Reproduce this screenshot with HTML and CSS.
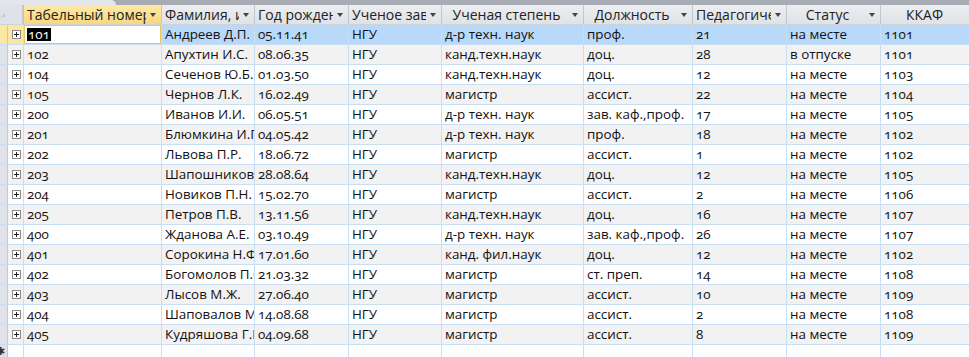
FILE: index.html
```html
<!DOCTYPE html>
<html lang="ru">
<head>
    <meta charset="UTF-8">
    <title>Сотрудники</title>
    <link rel="stylesheet" href="styles.css">
</head>
<body>
    <div class="sheet">
        <div class="topbar"><div class="tab"></div></div>

        <div class="row head">
            <div class="corner"><span class="corner-mark"></span></div>
            <div class="hcell active"><span class="label">Табельный номер</span><span class="arrow"></span></div>
            <div class="hcell"><span class="label">Фамилия, имя, отчество</span><span class="arrow"></span></div>
            <div class="hcell"><span class="label">Год рождения</span><span class="arrow"></span></div>
            <div class="hcell"><span class="label">Ученое заведение</span><span class="arrow"></span></div>
            <div class="hcell"><span class="label">Ученая степень</span><span class="arrow"></span></div>
            <div class="hcell"><span class="label">Должность</span><span class="arrow"></span></div>
            <div class="hcell"><span class="label">Педагогический стаж</span><span class="arrow"></span></div>
            <div class="hcell"><span class="label">Статус</span><span class="arrow"></span></div>
            <div class="hcell"><span class="label">ККАФ</span><span class="arrow"></span></div>
        </div>

        <div class="row current">
            <div class="sel"></div><div class="exp"><span class="plus"></span></div>
            <div class="cell focus"><span class="picked">101</span></div>
            <div class="cell">Андреев Д.П.</div><div class="cell">05.11.41</div><div class="cell">НГУ</div>
            <div class="cell">д-р техн. наук</div><div class="cell">проф.</div><div class="cell">21</div>
            <div class="cell">на месте</div><div class="cell">1101</div>
        </div>
        <div class="row alt">
            <div class="sel"></div><div class="exp"><span class="plus"></span></div>
            <div class="cell">102</div><div class="cell">Апухтин И.С.</div><div class="cell">08.06.35</div><div class="cell">НГУ</div>
            <div class="cell">канд.техн.наук</div><div class="cell">доц.</div><div class="cell">28</div>
            <div class="cell">в отпуске</div><div class="cell">1101</div>
        </div>
        <div class="row">
            <div class="sel"></div><div class="exp"><span class="plus"></span></div>
            <div class="cell">104</div><div class="cell">Сеченов Ю.Б.</div><div class="cell">01.03.50</div><div class="cell">НГУ</div>
            <div class="cell">канд.техн.наук</div><div class="cell">доц.</div><div class="cell">12</div>
            <div class="cell">на месте</div><div class="cell">1103</div>
        </div>
        <div class="row alt">
            <div class="sel"></div><div class="exp"><span class="plus"></span></div>
            <div class="cell">105</div><div class="cell">Чернов Л.К.</div><div class="cell">16.02.49</div><div class="cell">НГУ</div>
            <div class="cell">магистр</div><div class="cell">ассист.</div><div class="cell">22</div>
            <div class="cell">на месте</div><div class="cell">1104</div>
        </div>
        <div class="row">
            <div class="sel"></div><div class="exp"><span class="plus"></span></div>
            <div class="cell">200</div><div class="cell">Иванов И.И.</div><div class="cell">06.05.51</div><div class="cell">НГУ</div>
            <div class="cell">д-р техн. наук</div><div class="cell">зав. каф.,проф.</div><div class="cell">17</div>
            <div class="cell">на месте</div><div class="cell">1105</div>
        </div>
        <div class="row alt">
            <div class="sel"></div><div class="exp"><span class="plus"></span></div>
            <div class="cell">201</div><div class="cell">Блюмкина И.Г.</div><div class="cell">04.05.42</div><div class="cell">НГУ</div>
            <div class="cell">д-р техн. наук</div><div class="cell">проф.</div><div class="cell">18</div>
            <div class="cell">на месте</div><div class="cell">1102</div>
        </div>
        <div class="row">
            <div class="sel"></div><div class="exp"><span class="plus"></span></div>
            <div class="cell">202</div><div class="cell">Львова П.Р.</div><div class="cell">18.06.72</div><div class="cell">НГУ</div>
            <div class="cell">магистр</div><div class="cell">ассист.</div><div class="cell">1</div>
            <div class="cell">на месте</div><div class="cell">1102</div>
        </div>
        <div class="row alt">
            <div class="sel"></div><div class="exp"><span class="plus"></span></div>
            <div class="cell">203</div><div class="cell">Шапошников В.А.</div><div class="cell">28.08.64</div><div class="cell">НГУ</div>
            <div class="cell">канд.техн.наук</div><div class="cell">доц.</div><div class="cell">12</div>
            <div class="cell">на месте</div><div class="cell">1105</div>
        </div>
        <div class="row">
            <div class="sel"></div><div class="exp"><span class="plus"></span></div>
            <div class="cell">204</div><div class="cell">Новиков П.Н.</div><div class="cell">15.02.70</div><div class="cell">НГУ</div>
            <div class="cell">магистр</div><div class="cell">ассист.</div><div class="cell">2</div>
            <div class="cell">на месте</div><div class="cell">1106</div>
        </div>
        <div class="row alt">
            <div class="sel"></div><div class="exp"><span class="plus"></span></div>
            <div class="cell">205</div><div class="cell">Петров П.В.</div><div class="cell">13.11.56</div><div class="cell">НГУ</div>
            <div class="cell">канд.техн.наук</div><div class="cell">доц.</div><div class="cell">16</div>
            <div class="cell">на месте</div><div class="cell">1107</div>
        </div>
        <div class="row">
            <div class="sel"></div><div class="exp"><span class="plus"></span></div>
            <div class="cell">400</div><div class="cell">Жданова А.Е.</div><div class="cell">03.10.49</div><div class="cell">НГУ</div>
            <div class="cell">д-р техн. наук</div><div class="cell">зав. каф.,проф.</div><div class="cell">26</div>
            <div class="cell">на месте</div><div class="cell">1107</div>
        </div>
        <div class="row alt">
            <div class="sel"></div><div class="exp"><span class="plus"></span></div>
            <div class="cell">401</div><div class="cell">Сорокина Н.Ф.</div><div class="cell">17.01.60</div><div class="cell">НГУ</div>
            <div class="cell">канд. фил.наук</div><div class="cell">доц.</div><div class="cell">12</div>
            <div class="cell">на месте</div><div class="cell">1102</div>
        </div>
        <div class="row">
            <div class="sel"></div><div class="exp"><span class="plus"></span></div>
            <div class="cell">402</div><div class="cell">Богомолов П.С.</div><div class="cell">21.03.32</div><div class="cell">НГУ</div>
            <div class="cell">магистр</div><div class="cell">ст. преп.</div><div class="cell">14</div>
            <div class="cell">на месте</div><div class="cell">1108</div>
        </div>
        <div class="row alt">
            <div class="sel"></div><div class="exp"><span class="plus"></span></div>
            <div class="cell">403</div><div class="cell">Лысов М.Ж.</div><div class="cell">27.06.40</div><div class="cell">НГУ</div>
            <div class="cell">магистр</div><div class="cell">ассист.</div><div class="cell">10</div>
            <div class="cell">на месте</div><div class="cell">1109</div>
        </div>
        <div class="row">
            <div class="sel"></div><div class="exp"><span class="plus"></span></div>
            <div class="cell">404</div><div class="cell">Шаповалов М.И.</div><div class="cell">14.08.68</div><div class="cell">НГУ</div>
            <div class="cell">магистр</div><div class="cell">ассист.</div><div class="cell">2</div>
            <div class="cell">на месте</div><div class="cell">1108</div>
        </div>
        <div class="row alt">
            <div class="sel"></div><div class="exp"><span class="plus"></span></div>
            <div class="cell">405</div><div class="cell">Кудряшова Г.Г.</div><div class="cell">04.09.68</div><div class="cell">НГУ</div>
            <div class="cell">магистр</div><div class="cell">ассист.</div><div class="cell">8</div>
            <div class="cell">на месте</div><div class="cell">1109</div>
        </div>
        <div class="row new">
            <div class="sel"><span class="star">✱</span></div><div class="exp"></div>
            <div class="cell"></div><div class="cell"></div><div class="cell"></div><div class="cell"></div>
            <div class="cell"></div><div class="cell"></div><div class="cell"></div>
            <div class="cell"></div><div class="cell"></div>
        </div>
    </div>
</body>
</html>
```

FILE: styles.css
```css
body {
    margin: 0;
    background: #fff;
    font-family: "Open Sans", "Noto Sans", sans-serif;
    font-size: 14px;
    color: #111;
    overflow: hidden;
}
.sheet {
    width: 969px;
    height: 357px;
    overflow: hidden;
}
.topbar {
    height: 5px;
    background: #a7acb4;
}
.tab {
    width: 116px;
    height: 5px;
    background: #e3e7ec;
    border-top-right-radius: 5px;
}
.row {
    display: grid;
    grid-template-columns: 8px 15px 138px 93px 94px 93px 142px 109px 94px 94px 100px;
    height: 20px;
    box-sizing: border-box;
    border-bottom: 1px solid #c8def3;
    background: #fff;
}
.row.alt {
    background: #f2f2f2;
}
.row.current {
    background: #b8d9fa;
}
.row.new {
    border-bottom: none;
}
.sel {
    background: #e0e3e8;
    border-right: 1px solid #c6cad0;
    position: relative;
    overflow: hidden;
}
.exp {
    display: flex;
    align-items: center;
    justify-content: center;
    padding-left: 2px;
}
.row.current .sel,
.row.current .exp {
    background: #fce6a3;
    border-color: #e9c766;
}
.plus {
    width: 7px;
    height: 7px;
    border: 1px solid #8c8c8c;
    background: #fff;
    position: relative;
}
.plus::before,
.plus::after {
    content: "";
    position: absolute;
    background: #222;
}
.plus::before {
    left: 1px;
    top: 3px;
    width: 5px;
    height: 1px;
}
.plus::after {
    left: 3px;
    top: 1px;
    width: 1px;
    height: 5px;
}
.star {
    position: absolute;
    left: -4px;
    top: 0;
    font-size: 11px;
    line-height: 12px;
    color: #333;
}
.cell {
    border-left: 1px solid #c8def3;
    padding: 0 3px;
    font-size: 13.4px;
    line-height: 19px;
    white-space: nowrap;
    overflow: hidden;
    font-variant-numeric: oldstyle-nums;
}
.cell.focus {
    background: #fff;
    box-shadow: inset 0 0 0 1px #eac55a;
    padding-left: 3px;
}
.picked {
    background: #000;
    color: #fff;
    display: inline-block;
    line-height: 13px;
    padding: 0 1px;
}

/* header */
.head {
    background: linear-gradient(#eceef1, #dfe2e6);
    border-bottom: 1px solid #cfd3d8;
}
.corner {
    grid-column: span 2;
    background: #dfe3e8;
    border-right: 1px solid #c6cad0;
    position: relative;
}
.corner-mark {
    position: absolute;
    left: 1px;
    top: 8px;
    border-left: 4px solid transparent;
    border-bottom: 4px solid #c4c9cf;
}
.hcell {
    display: flex;
    align-items: center;
    border-left: 1px solid #c4c8ce;
    padding-left: 3px;
    overflow: hidden;
    color: #222;
}
.hcell.active {
    background: linear-gradient(#fde9a8, #f8d77e);
    border-left-color: #e6c163;
}
.label {
    flex: 1;
    min-width: 0;
    text-align: center;
    white-space: nowrap;
    overflow: hidden;
    line-height: 19px;
}
.arrow {
    flex: none;
    width: 0;
    height: 0;
    margin: 1px 5px 0 4px;
    border-left: 3px solid transparent;
    border-right: 3px solid transparent;
    border-top: 4px solid #444;
}
```
